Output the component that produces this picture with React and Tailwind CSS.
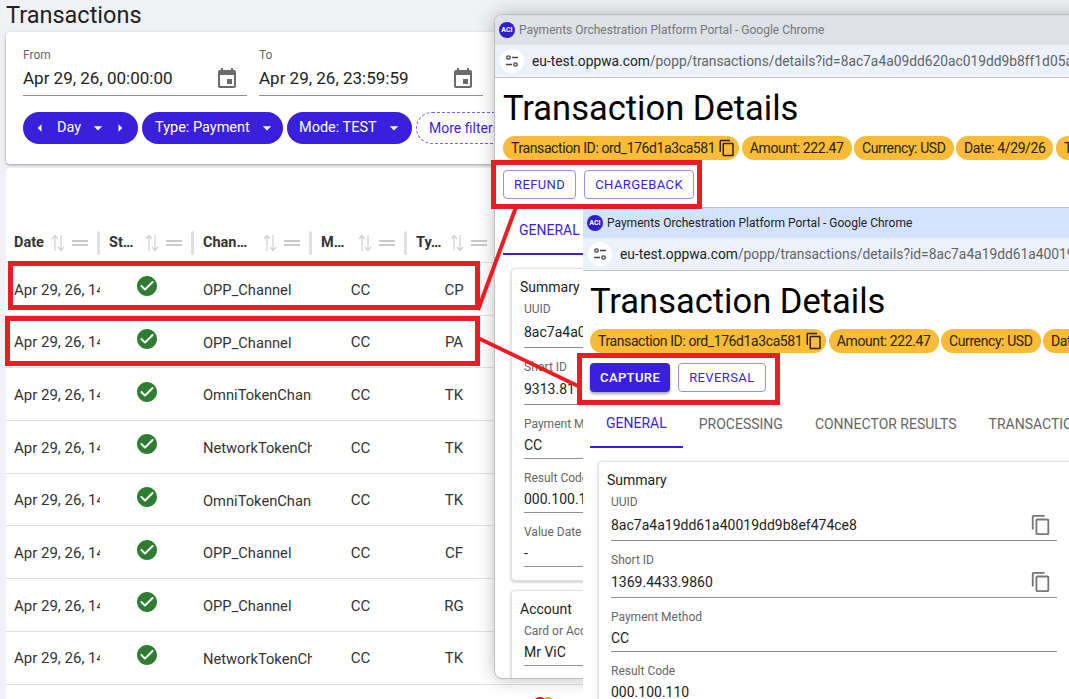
import React from "react";

const rows = [
  ["OPP_Channel", "CP"],
  ["OPP_Channel", "PA"],
  ["OmniTokenChannel", "TK"],
  ["NetworkTokenChannel", "TK"],
  ["OmniTokenChannel", "TK"],
  ["OPP_Channel", "CF"],
  ["OPP_Channel", "RG"],
  ["NetworkTokenChannel", "TK"],
];

const columns = ["Date", "St…", "Chan…", "M…", "Ty…"];

const gridCols = "grid grid-cols-[95px_94px_118px_95px_92px]";

const CopyIcon = ({ className }) => (
  <svg viewBox="0 0 24 24" className={className} fill="currentColor">
    <path d="M16 1H4c-1.1 0-2 .9-2 2v14h2V3h12V1zm3 4H8c-1.1 0-2 .9-2 2v14c0 1.1.9 2 2 2h11c1.1 0 2-.9 2-2V7c0-1.1-.9-2-2-2zm0 16H8V7h11v14z" />
  </svg>
);

const CalendarIcon = () => (
  <svg viewBox="0 0 24 24" className="w-6 h-6 text-[#6b6b6b]" fill="currentColor">
    <path d="M17 12h-5v5h5v-5zM16 1v2H8V1H6v2H5c-1.11 0-1.99.9-1.99 2L3 19c0 1.1.89 2 2 2h14c1.1 0 2-.9 2-2V5c0-1.1-.9-2-2-2h-1V1h-2zm3 18H5V8h14v11z" />
  </svg>
);

const CheckIcon = () => (
  <svg viewBox="0 0 24 24" className="w-6 h-6 text-[#2e7d32] mb-[7px] mr-[2px]" fill="currentColor">
    <path d="M12 2C6.48 2 2 6.48 2 12s4.48 10 10 10 10-4.48 10-10S17.52 2 12 2zM9.29 16.29 5.7 12.7a.9959.9959 0 0 1 0-1.41c.39-.39 1.02-.39 1.41 0L10 14.17l6.88-6.88c.39-.39 1.02-.39 1.41 0 .39.39.39 1.02 0 1.41l-7.59 7.59c-.38.39-1.02.39-1.41 0z" />
  </svg>
);

const SortIcon = () => (
  <svg viewBox="0 0 18 20" className="w-[18px] h-5" fill="none" stroke="#d0d0d0" strokeWidth="1.2">
    <path d="M6 18V3M3 6l3-3.5L9 6M12 2v15.5M9 14l3 3.5 3-3.5" />
  </svg>
);

const Arrow = ({ d, className }) => (
  <svg viewBox="0 0 24 24" className={className} fill="currentColor">
    <path d={d} />
  </svg>
);

const ARROW_LEFT = "M14 7l-5 5 5 5V7z";
const ARROW_RIGHT = "M10 17l5-5-5-5v10z";
const ARROW_DOWN = "M7 10l5 5 5-5z";

const DateField = ({ label, value }) => (
  <div className="w-[224px]">
    <div className="h-4 text-xs leading-4 text-[#666]">{label}</div>
    <div className="h-[33px] flex items-center justify-between border-b border-[#8f8f8f] pr-2">
      <span className="text-[17px] text-[#222]">{value}</span>
      <CalendarIcon />
    </div>
  </div>
);

const FilterChip = ({ children, width }) => (
  <div className={`h-8 rounded-2xl bg-[#3a1fdd] text-white text-[14.5px] flex items-center ${width}`}>{children}</div>
);

const HeaderCell = ({ label }) => (
  <div className="flex items-center pl-2 pr-[1px] h-6">
    <span className="flex-1 text-[14.5px] font-bold text-[#333] whitespace-nowrap">{label}</span>
    <SortIcon />
    <div className="w-4 h-[6px] ml-[5px] border-y-2 border-[#c9c9c9]" />
    <div className="w-[3px] h-6 ml-[9px] bg-[#e0e0e0] rounded-sm" />
  </div>
);

const TableRow = ({ channel, type }) => (
  <div className={`${gridCols} h-[52.7px] pt-[2px] border-b border-[#e0e0e0] items-center text-[15px] text-[#333]`}>
    <div className="pl-2 w-[94px] overflow-hidden whitespace-nowrap">Apr 29, 26, 14:22:10</div>
    <div className="flex justify-center">
      <CheckIcon />
    </div>
    <div className="pl-2 w-[117px] overflow-hidden whitespace-nowrap text-[14.7px]">{channel}</div>
    <div className="text-center">CC</div>
    <div className="text-center">{type}</div>
  </div>
);

const AciLogo = () => (
  <div className="w-4 h-4 rounded-full bg-[#2f1fc4] text-white text-[7px] font-bold leading-4 text-center shrink-0">ACI</div>
);

const TuneIcon = () => (
  <div className="w-6 h-6 rounded-full bg-white flex items-center justify-center shrink-0">
    <svg viewBox="0 0 16 16" className="w-4 h-4" fill="none" stroke="#444" strokeWidth="1.3">
      <circle cx="4.5" cy="4.5" r="1.7" />
      <path d="M8 4.5h6M2 11.5h6" />
      <circle cx="11.5" cy="11.5" r="1.7" />
    </svg>
  </div>
);

const Field = ({ label, value, copy }) => (
  <div className="w-[446px] ml-1 mb-[11px]">
    <div className="h-4 text-xs leading-4 text-[#666] whitespace-nowrap">{label}</div>
    <div className={`flex items-center justify-between border-b border-[#8f8f8f] text-sm text-[#222] ${copy ? "h-[30.5px]" : "h-[27px]"}`}>
      <span className="whitespace-nowrap">{value}</span>
      {copy && <CopyIcon className="w-[22px] h-[22px] mr-[5px] text-[#777]" />}
    </div>
  </div>
);

const Card = ({ title, children, className }) => (
  <div className={`w-[620px] rounded border border-[#e3e3e3] shadow-[0_1px_3px_rgba(0,0,0,0.25)] pt-[8px] pl-2 pb-[2px] bg-white ${className || ""}`}>
    <div className="text-sm leading-5 text-[#222] mb-[4px]">{title}</div>
    {children}
  </div>
);

const InfoChip = ({ children, copy }) => (
  <div className="h-6 rounded-xl bg-[#f9bc38] px-2 text-sm tracking-[-0.4px] leading-6 text-[#2a2209] flex items-center whitespace-nowrap">
    {children}
    {copy && <CopyIcon className="w-[18px] h-[18px] ml-[3px] -mr-[5px]" />}
  </div>
);

const ChromeBars = ({ active, url }) => (
  <>
    <div className={`h-[30px] flex items-center gap-[3px] pl-[4px] text-xs ${active ? "bg-[#d3e3fd] text-[#222]" : "bg-[#dee1e6] text-[#777]"}`}>
      <AciLogo />
      <span className="whitespace-nowrap ml-[1px]">Payments Orchestration Platform Portal - Google Chrome</span>
    </div>
    <div className="h-[33px] bg-[#edf2fa] border-b border-[#c4c7c5] flex items-center pl-[5px] gap-[8px]">
      <TuneIcon />
      <span className="text-[13.8px] whitespace-nowrap text-[#5f6368]">
        <span className="text-[#222]">eu-test.oppwa.com</span>
        {url}
      </span>
    </div>
  </>
);

const DetailsHead = ({ chips, children }) => (
  <>
    <div className="text-[34.5px] leading-10 text-black pt-[10px] box-content">Transaction Details</div>
    <div className="flex gap-[2.5px] mt-2">
      <InfoChip copy>Transaction ID: ord_176d1a3ca581</InfoChip>
      {chips.map((c) => (
        <InfoChip key={c}>{c}</InfoChip>
      ))}
    </div>
    <div className="flex gap-2 mt-[10px]">{children}</div>
  </>
);

const OutlineButton = ({ children }) => (
  <div className="h-[29px] px-[10px] flex items-center rounded border border-[#9a8cf0] text-[13px] tracking-[0.4px] text-[#3a1fdd]">{children}</div>
);

const RedBox = ({ className }) => <div className={`absolute border-[5px] border-[#ed1c24] ${className}`} />;

export default function App() {
  return (
    <div className="relative w-[1069px] h-[699px] overflow-hidden bg-[#f0f1f4] font-['Roboto',sans-serif]">
      <div className="w-[1060px] pl-[6px]">
        <h1 className="text-[23.5px] leading-[30px] text-[#222] mb-[2px]">Transactions</h1>

        <div className="bg-white rounded shadow-[0_1px_3px_rgba(0,0,0,0.35)] pt-[15px] pl-[17px] h-[132px]">
          <div className="flex gap-3">
            <DateField label="From" value="Apr 29, 26, 00:00:00" />
            <DateField label="To" value="Apr 29, 26, 23:59:59" />
          </div>
          <div className="flex gap-1 mt-4">
            <FilterChip width="w-[115px]">
              <Arrow d={ARROW_LEFT} className="w-[18px] h-[18px] ml-2" />
              <span className="ml-2">Day</span>
              <Arrow d={ARROW_DOWN} className="w-5 h-5 ml-[7px]" />
              <Arrow d={ARROW_RIGHT} className="w-[18px] h-[18px] ml-[3px]" />
            </FilterChip>
            <FilterChip width="w-[141px] pl-[13px]">
              <span>Type: Payment</span>
              <Arrow d={ARROW_DOWN} className="w-5 h-5 ml-[7px]" />
            </FilterChip>
            <FilterChip width="w-[125px] pl-[12px]">
              <span>Mode: TEST</span>
              <Arrow d={ARROW_DOWN} className="w-5 h-5 ml-[7px]" />
            </FilterChip>
            <div className="h-8 w-[110px] rounded-2xl border border-dashed border-[#7c5cf0] text-[#3a1fdd] text-sm flex items-center pl-3">More filters</div>
          </div>
        </div>

        <div className="bg-white rounded-t mt-1 h-[531px] pt-[63px]">
          <div className={`${gridCols} pb-[7px] border-b border-[#e0e0e0]`}>
            {columns.map((c) => (
              <HeaderCell key={c} label={c} />
            ))}
          </div>
          {rows.map((r, i) => (
            <TableRow key={i} channel={r[0]} type={r[1]} />
          ))}
        </div>
      </div>

      <svg viewBox="0 0 24 8" className="absolute left-[532px] top-[696px] w-6 h-2">
        <circle cx="8" cy="8" r="7" fill="#eb001b" />
        <circle cx="16" cy="8" r="7" fill="#f79e1b" />
      </svg>

      <div className="absolute left-[494px] top-[14px] w-[640px] h-[665px] rounded-lg overflow-hidden bg-white border border-[#bdbdbd] shadow-[0_0_18px_rgba(0,0,0,0.25)]">
        <ChromeBars url="/popp/transactions/details?id=8ac7a4a09dd620ac019dd9b8ff1d05a5" />
        <div className="pl-2">
          <DetailsHead chips={["Amount: 222.47", "Currency: USD", "Date: 4/29/26", "Time: 14:22"]}>
            <OutlineButton>REFUND</OutlineButton>
            <OutlineButton>CHARGEBACK</OutlineButton>
          </DetailsHead>
          <div className="mt-2 h-12 w-[92px] px-4 flex items-center border-b-2 border-[#3a1fdd] text-sm text-[#3a1fdd]">GENERAL</div>
          <Card title="Summary" className="mt-[13px] ml-2">
            <Field label="UUID" value="8ac7a4a09dd620ac019dd9b8ff1d05a5" copy />
            <Field label="Short ID" value="9313.8111.2040" copy />
            <Field label="Payment Method" value="CC" />
            <Field label="Result Code" value="000.100.110" />
            <Field label="Value Date" value="-" />
          </Card>
          <Card title="Account" className="mt-[9px] ml-2">
            <Field label="Card or Account Holder" value="Mr ViC" />
          </Card>
        </div>
      </div>

      <div className="absolute left-[583px] top-[207px] w-[640px] h-[492px] overflow-hidden bg-white border-t border-[#bdbdbd]">
        <ChromeBars active url="/popp/transactions/details?id=8ac7a4a19dd61a40019dd9b8ef474ce8" />
        <div className="pl-[7px]">
          <DetailsHead chips={["Amount: 222.47", "Currency: USD", "Date: 4/29/26"]}>
            <div className="h-[29px] px-[10px] flex items-center rounded bg-[#3a1fdd] text-white text-[13px] tracking-[0.4px] font-medium shadow-[0_2px_3px_rgba(0,0,0,0.35)]">CAPTURE</div>
            <OutlineButton>REVERSAL</OutlineButton>
          </DetailsHead>
          <div className="mt-2 h-12 flex text-sm text-[#666]">
            <div className="px-4 flex items-center border-b-2 border-[#3a1fdd] text-[#3a1fdd]">GENERAL</div>
            <div className="px-4 flex items-center">PROCESSING</div>
            <div className="px-4 flex items-center">CONNECTOR RESULTS</div>
            <div className="px-4 flex items-center whitespace-nowrap">TRANSACTION LOG</div>
          </div>
          <Card title="Summary" className="mt-[13px] ml-2">
            <Field label="UUID" value="8ac7a4a19dd61a40019dd9b8ef474ce8" copy />
            <Field label="Short ID" value="1369.4433.9860" copy />
            <Field label="Payment Method" value="CC" />
            <Field label="Result Code" value="000.100.110" />
          </Card>
        </div>
      </div>

      <svg viewBox="0 0 1069 699" className="absolute inset-0 w-[1069px] h-[699px] pointer-events-none">
        <path d="M478 310L516 207" stroke="#ed1c24" strokeWidth="4" fill="none" />
        <path d="M478 338L578 386" stroke="#ed1c24" strokeWidth="4" fill="none" />
      </svg>
      <RedBox className="left-[8px] top-[261px] w-[472px] h-[49px]" />
      <RedBox className="left-[5px] top-[316px] w-[475px] h-[50px]" />
      <RedBox className="left-[491px] top-[160px] w-[211px] h-[49px]" />
      <RedBox className="left-[577px] top-[353px] w-[203px] h-[52px]" />
    </div>
  );
}
